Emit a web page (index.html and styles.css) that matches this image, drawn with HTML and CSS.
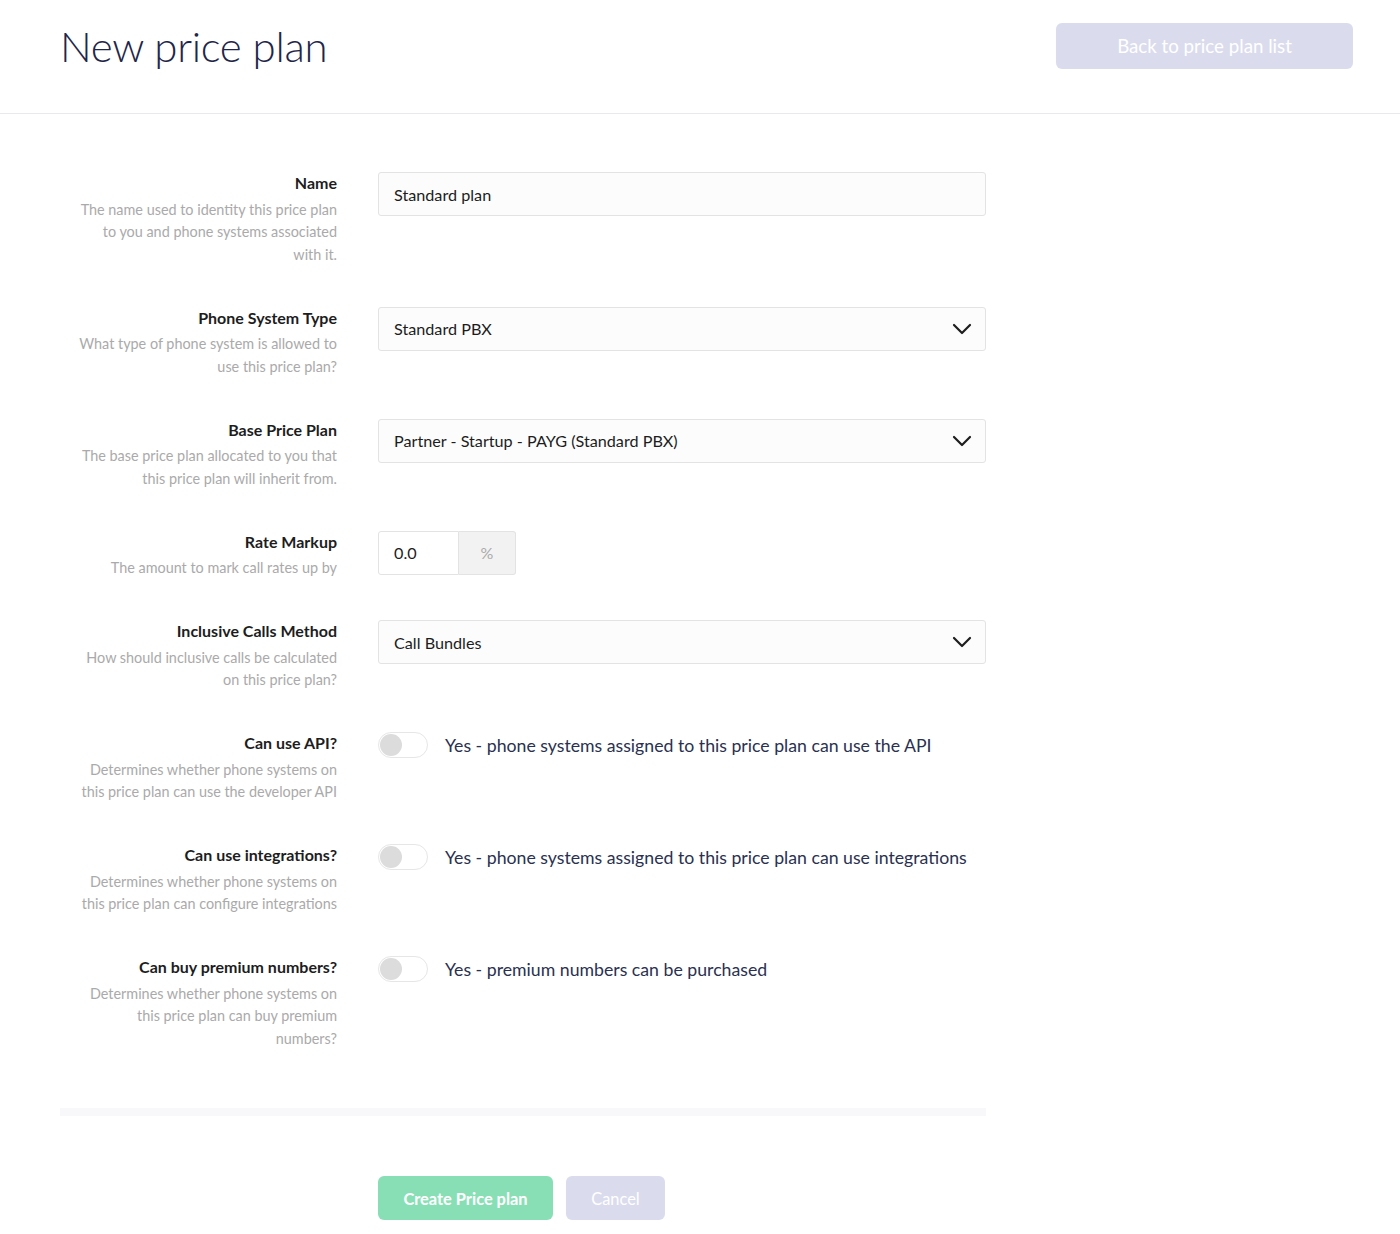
FILE: index.html
```html
<!DOCTYPE html>
<html lang="en">
<head>
<meta charset="utf-8">
<title>New price plan</title>
<link rel="stylesheet" href="styles.css">
</head>
<body>
<header class="page-header">
  <h1 class="page-title">New price plan</h1>
  <button class="btn btn-muted btn-back" type="button">Back to price plan list</button>
</header>

<main class="content">
  <form class="plan-form">
    <div class="form-row">
      <div class="field-info">
        <div class="field-label">Name</div>
        <div class="field-desc">The name used to identity this price plan<br>to you and phone systems associated<br>with it.</div>
      </div>
      <div class="field-control">
        <div class="input">Standard plan</div>
      </div>
    </div>

    <div class="form-row">
      <div class="field-info">
        <div class="field-label">Phone System Type</div>
        <div class="field-desc">What type of phone system is allowed to<br>use this price plan?</div>
      </div>
      <div class="field-control">
        <div class="input select">
          <span>Standard PBX</span>
          <svg class="chevron" width="20" height="12" viewBox="0 0 20 12"><path d="M2 2 L10 10 L18 2" fill="none" stroke="#1d1d1d" stroke-width="2.2" stroke-linecap="round" stroke-linejoin="round"/></svg>
        </div>
      </div>
    </div>

    <div class="form-row">
      <div class="field-info">
        <div class="field-label">Base Price Plan</div>
        <div class="field-desc">The base price plan allocated to you that<br>this price plan will inherit from.</div>
      </div>
      <div class="field-control">
        <div class="input select">
          <span>Partner - Startup - PAYG (Standard PBX)</span>
          <svg class="chevron" width="20" height="12" viewBox="0 0 20 12"><path d="M2 2 L10 10 L18 2" fill="none" stroke="#1d1d1d" stroke-width="2.2" stroke-linecap="round" stroke-linejoin="round"/></svg>
        </div>
      </div>
    </div>

    <div class="form-row">
      <div class="field-info">
        <div class="field-label">Rate Markup</div>
        <div class="field-desc">The amount to mark call rates up by</div>
      </div>
      <div class="field-control">
        <div class="input-group">
          <div class="input input-small">0.0</div>
          <div class="addon">%</div>
        </div>
      </div>
    </div>

    <div class="form-row">
      <div class="field-info">
        <div class="field-label">Inclusive Calls Method</div>
        <div class="field-desc">How should inclusive calls be calculated<br>on this price plan?</div>
      </div>
      <div class="field-control">
        <div class="input select">
          <span>Call Bundles</span>
          <svg class="chevron" width="20" height="12" viewBox="0 0 20 12"><path d="M2 2 L10 10 L18 2" fill="none" stroke="#1d1d1d" stroke-width="2.2" stroke-linecap="round" stroke-linejoin="round"/></svg>
        </div>
      </div>
    </div>

    <div class="form-row">
      <div class="field-info">
        <div class="field-label">Can use API?</div>
        <div class="field-desc">Determines whether phone systems on<br>this price plan can use the developer API</div>
      </div>
      <div class="field-control">
        <label class="toggle-line">
          <span class="toggle"><span class="knob"></span></span>
          <span class="toggle-text">Yes - phone systems assigned to this price plan can use the API</span>
        </label>
      </div>
    </div>

    <div class="form-row">
      <div class="field-info">
        <div class="field-label">Can use integrations?</div>
        <div class="field-desc">Determines whether phone systems on<br>this price plan can configure integrations</div>
      </div>
      <div class="field-control">
        <label class="toggle-line">
          <span class="toggle"><span class="knob"></span></span>
          <span class="toggle-text">Yes - phone systems assigned to this price plan can use integrations</span>
        </label>
      </div>
    </div>

    <div class="form-row">
      <div class="field-info">
        <div class="field-label">Can buy premium numbers?</div>
        <div class="field-desc">Determines whether phone systems on<br>this price plan can buy premium<br>numbers?</div>
      </div>
      <div class="field-control">
        <label class="toggle-line">
          <span class="toggle"><span class="knob"></span></span>
          <span class="toggle-text">Yes - premium numbers can be purchased</span>
        </label>
      </div>
    </div>

    <div class="form-divider"></div>

    <div class="form-actions">
      <button class="btn btn-green" type="button">Create Price plan</button>
      <button class="btn btn-muted btn-cancel" type="button">Cancel</button>
    </div>
  </form>
</main>
</body>
</html>
```

FILE: styles.css
```css
* { box-sizing: border-box; }

html, body {
  margin: 0;
  padding: 0;
  background: #ffffff;
  font-family: Lato, "Open Sans", Arial, sans-serif;
  color: #1d1d1d;
}

.page-header {
  display: flex;
  align-items: flex-start;
  justify-content: space-between;
  height: 114px;
  padding: 0 47px 0 60px;
  border-bottom: 1px solid #e9e9ec;
}

.page-title {
  margin: 18px 0 0 0;
  font-size: 42px;
  line-height: 56px;
  font-weight: 300;
  color: #1e2649;
  letter-spacing: -0.3px;
}

.btn {
  border: none;
  border-radius: 6px;
  font-family: inherit;
  cursor: pointer;
}

.btn-back {
  margin-top: 23px;
  width: 297px;
  height: 46px;
  font-size: 18.7px;
  font-weight: 400;
}

.btn-muted {
  background: #dadced;
  color: #ffffff;
}

.content {
  padding: 58px 0 0 60px;
}

.plan-form {
  width: 926px;
}

.form-row {
  display: flex;
  gap: 41px;
  margin-bottom: 40.5px;
}

.field-info {
  width: 277px;
  flex: none;
  text-align: right;
}

.field-label {
  font-size: 16px;
  font-weight: 700;
  line-height: 22px;
  color: #1d1d1d;
}

.field-desc {
  margin-top: 4.5px;
  font-size: 14.4px;
  line-height: 22.5px;
  color: #aaaaaa;
  white-space: nowrap;
}

.field-control {
  flex: 1;
}

.input {
  display: flex;
  align-items: center;
  height: 44px;
  padding: 0 15px;
  background: #fcfcfc;
  border: 1px solid #e3e3e3;
  border-radius: 3px;
  font-size: 16.2px;
  color: #1d1d1d;
}

.select {
  justify-content: space-between;
  padding-right: 13px;
}

.input-group {
  display: flex;
  width: 138px;
}

.input-small {
  width: 81px;
  border-radius: 3px 0 0 3px;
  background: #ffffff;
}

.addon {
  display: flex;
  align-items: center;
  justify-content: center;
  width: 57px;
  height: 44px;
  background: #f2f2f2;
  border: 1px solid #e3e3e3;
  border-left: none;
  border-radius: 0 3px 3px 0;
  font-size: 16px;
  color: #aaaaaa;
}

.toggle-line {
  display: flex;
  align-items: center;
  gap: 17px;
  height: 26px;
}

.toggle {
  position: relative;
  display: block;
  width: 50px;
  height: 26px;
  border: 1px solid #e6e6e6;
  border-radius: 13px;
  background: #ffffff;
  flex: none;
}

.knob {
  position: absolute;
  left: 1px;
  top: 1px;
  width: 22px;
  height: 22px;
  border-radius: 50%;
  background: #dcdcdc;
}

.toggle-text {
  font-size: 17.7px;
  color: #2a3150;
  white-space: nowrap;
}

.form-divider {
  height: 8px;
  background: #f8f8fb;
  margin-top: 58px;
}

.form-actions {
  display: flex;
  gap: 13px;
  padding-left: 318px;
  margin-top: 60px;
}

.btn-green {
  width: 175px;
  height: 44px;
  background: #89dfb5;
  color: #ffffff;
  font-size: 16.4px;
  font-weight: 700;
}

.btn-cancel {
  width: 99px;
  height: 44px;
  font-size: 16.4px;
  font-weight: 400;
}
```
